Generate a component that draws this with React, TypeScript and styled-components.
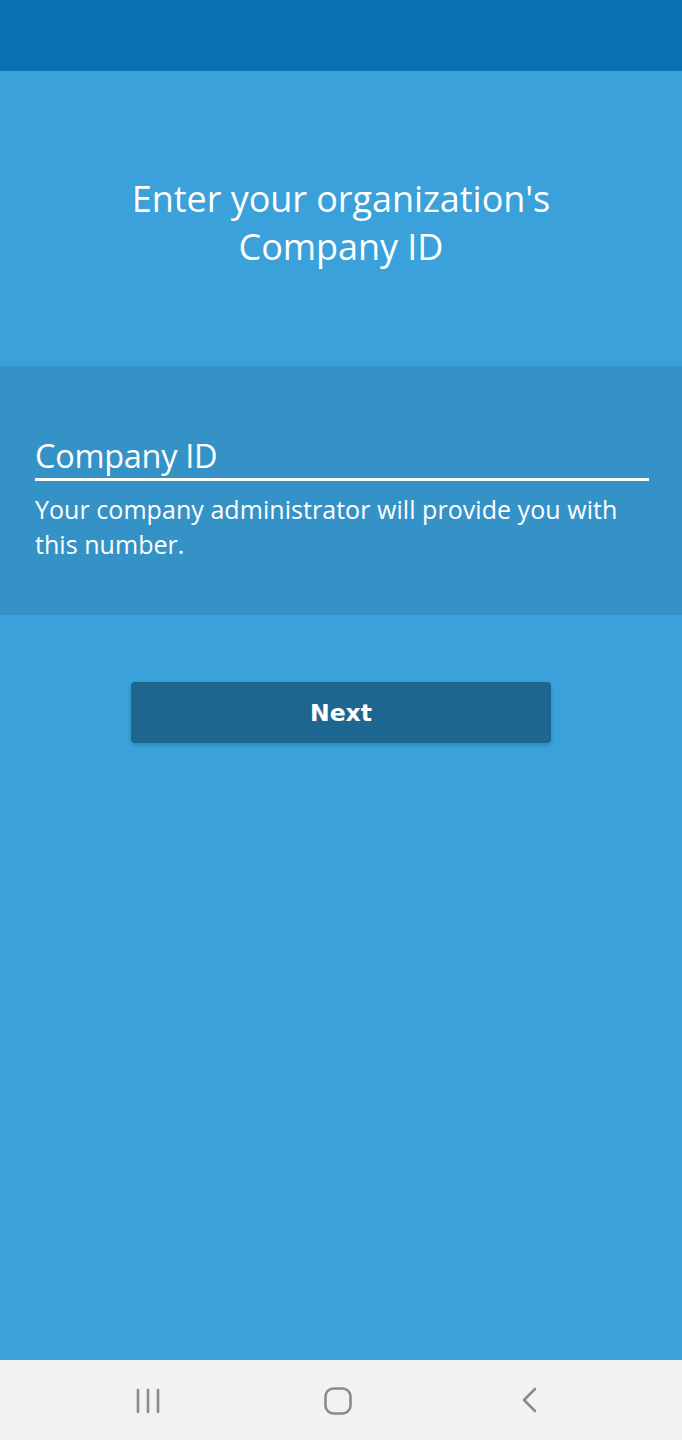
import React from "react";
import styled, { createGlobalStyle } from "styled-components";

const Global = createGlobalStyle`
  html, body { margin: 0; padding: 0; }
  body { font-family: "Open Sans", "Noto Sans", sans-serif; background: #3ba1da; }
`;

const Screen = styled.div`
  width: 682px;
  height: 1440px;
  display: flex;
  flex-direction: column;
  background: #3ba1da;
  color: #ffffff;
`;

const StatusBar = styled.div`
  height: 71px;
  background: #0971b3;
  flex-shrink: 0;
`;

const Header = styled.div`
  height: 295px;
  display: flex;
  align-items: center;
  justify-content: center;
  flex-shrink: 0;
`;

const Title = styled.h1`
  margin: 0;
  padding-top: 8px;
  font-size: 36px;
  font-weight: 400;
  line-height: 48px;
  text-align: center;
  letter-spacing: -0.05px;
`;

const FieldBand = styled.div`
  height: 249px;
  background: #3592c7;
  padding: 70px 33px 0 35px;
  box-sizing: border-box;
  flex-shrink: 0;
`;

const FieldLabel = styled.div`
  font-size: 32.5px;
  line-height: 40px;
  padding-bottom: 2px;
  border-bottom: 3px solid #ffffff;
  letter-spacing: -0.3px;
`;

const Helper = styled.p`
  margin: 11px 0 0;
  font-size: 25px;
  line-height: 35px;
  letter-spacing: 0.05px;
`;

const ButtonArea = styled.div`
  display: flex;
  justify-content: center;
  padding-top: 67px;
  flex: 1;
`;

const NextButton = styled.button`
  width: 420px;
  height: 61px;
  border: none;
  border-radius: 4px;
  background: #1c6690;
  color: #ffffff;
  font-family: "DejaVu Sans", "Open Sans", sans-serif;
  font-weight: 700;
  font-size: 23.5px;
  padding: 0;
  box-shadow: 0 2px 4px rgba(0, 0, 0, 0.18);
`;

const NavBar = styled.div`
  height: 80px;
  background: #f2f2f2;
  display: flex;
  align-items: center;
  justify-content: space-between;
  padding: 2px 142px 0 134px;
  box-sizing: border-box;
  flex-shrink: 0;
`;

const NavIcon = styled.svg`
  display: block;
`;

export default function App() {
  return (
    <>
      <Global />
      <Screen>
        <StatusBar />
        <Header>
          <Title>
            Enter your organization's
            <br />
            Company ID
          </Title>
        </Header>
        <FieldBand>
          <FieldLabel>Company ID</FieldLabel>
          <Helper>Your company administrator will provide you with this number.</Helper>
        </FieldBand>
        <ButtonArea>
          <div>
            <NextButton>Next</NextButton>
          </div>
        </ButtonArea>
        <NavBar>
          <NavIcon width="28" height="28" viewBox="0 0 28 28">
            <g stroke="#8a8a8a" strokeWidth="2.6" strokeLinecap="round">
              <line x1="4" y1="3" x2="4" y2="25" />
              <line x1="14" y1="3" x2="14" y2="25" />
              <line x1="24" y1="3" x2="24" y2="25" />
            </g>
          </NavIcon>
          <NavIcon width="30" height="30" viewBox="0 0 30 30" style={{ marginLeft: -6 }}>
            <rect x="2.5" y="2.5" width="25" height="25" rx="8" fill="none" stroke="#8a8a8a" strokeWidth="2.6" />
          </NavIcon>
          <NavIcon width="20" height="30" viewBox="0 0 20 30">
            <polyline points="15,3 4,14 15,25" fill="none" stroke="#8a8a8a" strokeWidth="2.6" strokeLinecap="round" strokeLinejoin="round" />
          </NavIcon>
        </NavBar>
      </Screen>
    </>
  );
}
